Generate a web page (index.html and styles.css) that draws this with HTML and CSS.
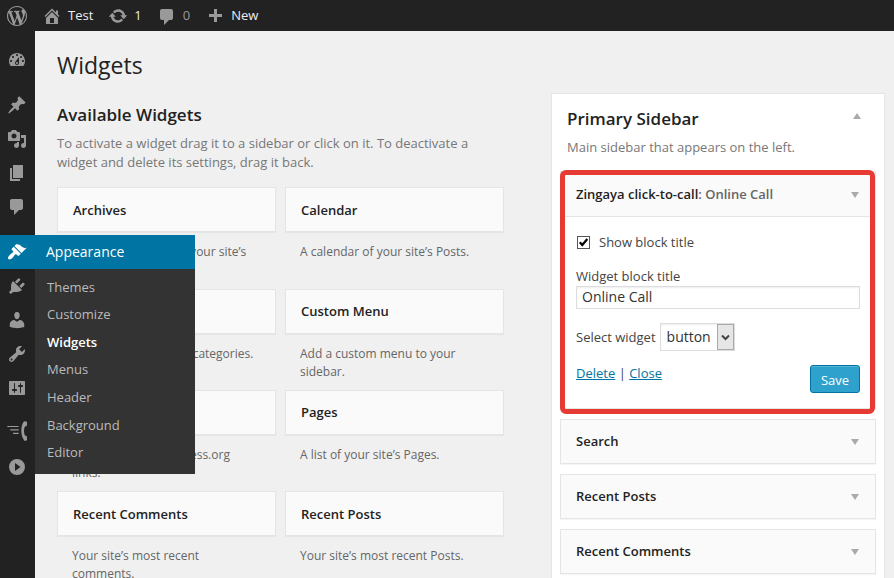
FILE: index.html
```html
<!DOCTYPE html>
<html lang="en">
<head>
<meta charset="utf-8">
<title>Widgets</title>
<link rel="stylesheet" href="styles.css">
</head>
<body>
<header class="adminbar">
  <svg class="icon logo" viewBox="0 0 20 20"><path d="M20 10c0-5.51-4.49-10-10-10C4.48 0 0 4.49 0 10c0 5.52 4.48 10 10 10 5.51 0 10-4.48 10-10zM7.78 15.37L4.37 6.22c.55-.02 1.17-.08 1.17-.08.5-.06.44-1.13-.06-1.11 0 0-1.45.11-2.37.11-.18 0-.37 0-.58-.01C4.12 2.69 6.87 1.11 10 1.11c2.33 0 4.45.87 6.05 2.34-.68-.11-1.65.39-1.65 1.58 0 .74.45 1.36.9 2.1.35.61.55 1.36.55 2.46 0 1.49-1.4 5-1.4 5l-3.03-8.37c.54-.02.82-.17.82-.17.5-.05.44-1.25-.06-1.22 0 0-1.44.12-2.38.12-.87 0-2.33-.12-2.33-.12-.5-.03-.56 1.2-.06 1.22l.92.08 1.26 3.41zM17.41 10c.24-.64.74-1.87.43-4.25.7 1.29 1.05 2.71 1.05 4.25 0 3.29-1.73 6.24-4.4 7.78.97-2.59 1.94-5.2 2.92-7.78zM6.1 18.09C3.12 16.65 1.11 13.53 1.11 10c0-1.3.23-2.48.72-3.59C3.25 10.3 4.67 14.2 6.1 18.09zm4.03-6.63l2.58 6.98c-.86.29-1.76.45-2.71.45-.79 0-1.57-.11-2.29-.33.81-2.38 1.62-4.74 2.42-7.1z"/></svg>
  <a class="bar-item site"><svg class="icon" viewBox="0 0 20 20"><path d="M16 8.500l1.530 1.530-1.060 1.060L10 4.600l-6.470 6.490-1.060-1.060L10 2.500l4 4v-2h2v4zm-6-2.460l6 5.990V18H4v-5.970zM12 17v-5H8v5h4z"/></svg><span>Test</span></a>
  <a class="bar-item updates"><svg class="icon" viewBox="0 0 20 20"><path d="M10.2 3.28c3.53 0 6.43 2.61 6.92 6h2.08l-3.5 4-3.5-4h2.32c-.45-1.97-2.21-3.45-4.32-3.45-1.45 0-2.73.71-3.54 1.78L4.95 5.66C6.23 4.2 8.11 3.28 10.2 3.28zm-.4 13.44c-3.52 0-6.43-2.61-6.92-6H.8l3.5-4c1.17 1.33 2.33 2.67 3.5 4H5.48c.45 1.97 2.21 3.45 4.32 3.45 1.45 0 2.73-.71 3.54-1.78l1.71 1.95c-1.28 1.46-3.15 2.38-5.25 2.38z"/></svg><span>1</span></a>
  <a class="bar-item comments"><svg class="icon" viewBox="0 0 20 20"><path d="M5 2h9c1.1 0 2 .9 2 2v7c0 1.1-.9 2-2 2h-2l-5 5v-5H5c-1.1 0-2-.9-2-2V4c0-1.1.9-2 2-2z"/></svg><span>0</span></a>
  <a class="bar-item new"><svg class="icon" viewBox="0 0 20 20"><path d="M17 7v3h-5v5H9v-5H4V7h5V2h3v5h5z"/></svg><span>New</span></a>
</header>
<div class="shell">
  <nav class="adminmenu">
    <a class="menu-item"><svg class="icon" viewBox="0 0 20 20"><path d="M3.76 16h12.48c1.1-1.37 1.76-3.11 1.76-5 0-4.42-3.58-8-8-8s-8 3.58-8 8c0 1.89.66 3.63 1.76 5zM10 4c.55 0 1 .45 1 1s-.45 1-1 1-1-.45-1-1 .45-1 1-1zM6 6c.55 0 1 .45 1 1s-.45 1-1 1-1-.45-1-1 .45-1 1-1zm8 0c.55 0 1 .45 1 1s-.45 1-1 1-1-.45-1-1 .45-1 1-1zm-5.37 5.55L12 7v6c0 1.1-.9 2-2 2s-2-.9-2-2c0-.57.24-1.08.63-1.45zM4 10c.55 0 1 .45 1 1s-.45 1-1 1-1-.45-1-1 .45-1 1-1zm12 0c.55 0 1 .45 1 1s-.45 1-1 1-1-.45-1-1 .45-1 1-1zm-5 3c0-.55-.45-1-1-1s-1 .45-1 1 .45 1 1 1 1-.45 1-1z"/></svg></a>
    <div class="separator"></div>
    <a class="menu-item"><svg class="icon" viewBox="0 0 20 20"><path d="M10.44 3.02l1.82-1.82 6.36 6.35-1.83 1.82c-1.05-.68-2.48-.57-3.41.36l-.75.75c-.92.93-1.04 2.35-.35 3.41l-1.83 1.82-2.41-2.41-2.8 2.79c-.42.42-3.38 2.71-3.8 2.29s1.86-3.39 2.28-3.81l2.79-2.79L4.1 9.36l1.83-1.82c1.05.69 2.48.57 3.4-.36l.75-.75c.93-.92 1.05-2.35.36-3.41z"/></svg></a>
    <a class="menu-item"><svg class="icon" viewBox="0 0 20 20"><path d="M13 11V4c0-.55-.45-1-1-1h-1.67L9 1H5L3.67 3H2c-.55 0-1 .45-1 1v7c0 .55.45 1 1 1h10c.55 0 1-.45 1-1zM7 4.5c1.38 0 2.5 1.12 2.5 2.5S8.38 9.5 7 9.5 4.5 8.38 4.5 7 5.62 4.5 7 4.5zM14 6h5v10.5c0 1.38-1.12 2.5-2.5 2.5S14 17.88 14 16.5s1.12-2.5 2.5-2.5c.17 0 .34.02.5.05V9h-3V6zm-4 8.05V13h2v3.5c0 1.38-1.12 2.5-2.5 2.5S7 17.88 7 16.5 8.12 14 9.5 14c.17 0 .34.02.5.05z"/></svg></a>
    <a class="menu-item"><svg class="icon" viewBox="0 0 20 20"><path d="M6 15V2h10v13H6zm-1 1h8v2H3V5h2v11z"/></svg></a>
    <a class="menu-item"><svg class="icon" viewBox="0 0 20 20"><path d="M5 2h9c1.1 0 2 .9 2 2v7c0 1.1-.9 2-2 2h-2l-5 5v-5H5c-1.1 0-2-.9-2-2V4c0-1.1.9-2 2-2z"/></svg></a>
    <div class="separator"></div>
    <div class="menu-current">
      <a class="menu-item"><svg class="icon" viewBox="0 0 20 20"><path d="M14.48 11.06L7.41 3.99l1.5-1.5c.5-.56 2.3-.47 3.51.32 1.21.8 1.43 1.28 2.91 2.1 1.18.64 2.45 1.26 4.45.85zm-.71.71L6.7 4.7 4.93 6.47c-.39.39-.39 1.02 0 1.41l1.06 1.06c.39.39.39 1.03 0 1.42-.6.6-1.43 1.11-2.21 1.69-.35.26-.7.53-1.01.84C1.43 14.23.4 16.08 1.4 17.07c.99 1 2.84-.03 4.18-1.36.31-.31.58-.66.85-1.02.57-.78 1.08-1.61 1.69-2.21.39-.39 1.02-.39 1.41 0l1.06 1.06c.39.39 1.02.39 1.41 0z"/></svg></a>
      <div class="flyout">
        <div class="flyout-head">Appearance</div>
        <ul class="submenu">
          <li>Themes</li>
          <li>Customize</li>
          <li class="active">Widgets</li>
          <li>Menus</li>
          <li>Header</li>
          <li>Background</li>
          <li>Editor</li>
        </ul>
      </div>
    </div>
    <a class="menu-item"><svg class="icon" viewBox="0 0 20 20"><path d="M13.11 4.36L9.87 7.6 8 5.73l3.24-3.24c.35-.34 1.05-.2 1.56.32.52.51.66 1.21.31 1.55zm-8 1.77l.91-1.12 9.01 9.01-1.19.84c-.71.71-2.63 1.16-3.82 1.16H6.14L4.9 17.26c-.59.59-1.54.59-2.12 0-.59-.58-.59-1.53 0-2.12l1.24-1.24v-3.88c0-1.13.4-3.19 1.09-3.89zm7.26 3.97l3.24-3.24c.34-.35 1.04-.21 1.55.31.52.51.66 1.21.31 1.55l-3.24 3.25z"/></svg></a>
    <a class="menu-item"><svg class="icon" viewBox="0 0 20 20"><path d="M10 9.25c-2.27 0-2.73-3.44-2.73-3.44C7 4.02 7.82 2 9.97 2c2.16 0 2.98 2.02 2.71 3.81 0 0-.41 3.44-2.68 3.44zm0 2.57L12.72 10c2.39 0 4.52 2.33 4.52 4.53v2.49s-3.65 1.13-7.24 1.13c-3.65 0-7.24-1.13-7.24-1.13v-2.49c0-2.25 1.94-4.48 4.47-4.48z"/></svg></a>
    <a class="menu-item"><svg class="icon" viewBox="0 0 20 20"><path d="M16.68 9.77c-1.34 1.34-3.3 1.67-4.95.99l-5.41 6.52c-.99.99-2.59.99-3.58 0s-.99-2.59 0-3.57l6.52-5.42c-.68-1.65-.35-3.61.99-4.95 1.28-1.28 3.12-1.62 4.72-1.06l-2.89 2.89 2.82 2.82 2.86-2.87c.53 1.58.18 3.39-1.08 4.65zM3.81 16.21c.4.39 1.04.39 1.43 0 .4-.4.4-1.04 0-1.43-.39-.4-1.03-.4-1.43 0-.39.39-.39 1.03 0 1.43z"/></svg></a>
    <a class="menu-item"><svg class="icon" viewBox="0 0 20 20"><path d="M18 16V4c0-.55-.45-1-1-1H3c-.55 0-1 .45-1 1v12c0 .55.45 1 1 1h14c.55 0 1-.45 1-1zM8 11h1c.55 0 1 .45 1 1s-.45 1-1 1H8v1.5c0 .28-.22.5-.5.5s-.5-.22-.5-.5V13H6c-.55 0-1-.45-1-1s.45-1 1-1h1V5.5c0-.28.22-.5.5-.5s.5.22.5.5V11zm5-2h-1c-.55 0-1-.45-1-1s.45-1 1-1h1V5.5c0-.28.22-.5.5-.5s.5.22.5.5V7h1c.55 0 1 .45 1 1s-.45 1-1 1h-1v5.500c0 .28-.22.5-.5.5s-.5-.22-.5-.5V9z"/></svg></a>
    <a class="menu-item call"><svg class="icon" viewBox="0 0 20 20"><path d="M.3 4.900h11.200v1.200H.3zM3.300 8.300h8.400v1.200H3.300zM6 11.700h5.700v1.200H6zM17 .2l3 .6.200 3.700-2.400 1.300c-1.100 2.800-1.100 5.600 0 8.400l2.400 1.400-.2 3.700-2.400.600C13.300 15.200 13.300 4.800 17 .2z"/></svg></a>
    <a class="menu-item collapse"><svg class="icon" viewBox="0 0 20 20"><path fill-rule="evenodd" d="M10 2a8 8 0 1 1 0 16 8 8 0 0 1 0-16zM8 6v8l5.500-4z"/></svg></a>
  </nav>
  <main class="content">
    <section class="available">
      <h1>Widgets</h1>
      <h2>Available Widgets</h2>
      <p class="intro">To activate a widget drag it to a sidebar or click on it. To deactivate a widget and delete its settings, drag it back.</p>
      <div class="widget-grid">
        <article><h3 class="widget-title">Archives</h3><p>A monthly archive of your site’s Posts.</p></article>
        <article><h3 class="widget-title">Calendar</h3><p>A calendar of your site’s Posts.</p></article>
        <article><h3 class="widget-title">Categories</h3><p>A list or dropdown of categories.</p></article>
        <article><h3 class="widget-title">Custom Menu</h3><p>Add a custom menu to your sidebar.</p></article>
        <article><h3 class="widget-title">Meta</h3><p>Login, RSS, &amp; WordPress.org links.</p></article>
        <article><h3 class="widget-title">Pages</h3><p>A list of your site’s Pages.</p></article>
        <article><h3 class="widget-title">Recent Comments</h3><p>Your site’s most recent comments.</p></article>
        <article><h3 class="widget-title">Recent Posts</h3><p>Your site’s most recent Posts.</p></article>
      </div>
    </section>
    <section class="sidebar">
      <div class="sidebar-head"><h2>Primary Sidebar</h2><i class="arrow up"></i></div>
      <p class="sidebar-desc">Main sidebar that appears on the left.</p>
      <div class="widget open">
        <h3 class="widget-title"><span>Zingaya click-to-call<em>: Online Call</em></span><i class="arrow"></i></h3>
        <div class="widget-form">
          <label class="check"><span class="box"><svg viewBox="0 0 11 11"><path d="M1.800 5.200l2.500 2.800L9.300 2" /></svg></span>Show block title</label>
          <label class="field-label">Widget block title</label>
          <div class="text-input">Online Call</div>
          <div class="select-row"><label>Select widget</label><div class="select"><span>button</span><b><svg viewBox="0 0 9 7"><path d="M1 1.500l3.500 3.500L8 1.500"/></svg></b></div></div>
          <div class="actions"><div><a>Delete</a> | <a>Close</a></div><button>Save</button></div>
        </div>
      </div>
      <div class="widget"><h3 class="widget-title">Search<i class="arrow"></i></h3></div>
      <div class="widget"><h3 class="widget-title">Recent Posts<i class="arrow"></i></h3></div>
      <div class="widget"><h3 class="widget-title">Recent Comments<i class="arrow"></i></h3></div>
    </section>
  </main>
</div>
</body>
</html>
```
FILE: styles.css
```css
* { box-sizing: border-box; }
body, h1, h2, h3, p, ul { margin: 0; padding: 0; }
html, body { height: 578px; overflow: hidden; }
body {
  display: flex;
  flex-direction: column;
  background: #f0f0f0;
  color: #444;
  font: 13px/19px "Open Sans", sans-serif;
}
.icon { width: 20px; height: 20px; fill: #999; flex: none; display: block; }

.adminbar {
  height: 31px;
  flex: none;
  display: flex;
  align-items: center;
  background: #222;
  color: #eee;
}
.logo { margin-left: 7px; }
.bar-item { display: flex; align-items: center; }
.bar-item span { margin-left: 6px; }
.site { margin-left: 15px; }
.updates { margin-left: 15px; }
.comments { margin-left: 15px; }
.comments .icon { margin-top: 2px; }
.comments span { color: #999; }
.new { margin-left: 15px; }
.new .icon { margin-top: 3px; }

.shell { flex: 1; display: flex; min-height: 0; overflow: hidden; }
.adminmenu { width: 35px; flex: none; background: #222; padding-top: 12px; }
.menu-item { height: 34px; display: flex; align-items: center; padding-left: 7px; }
.separator { height: 11px; }
.menu-current { position: relative; background: #0074a2; }
.menu-current .icon { fill: #fff; }
.call { margin-top: 9px; }
.collapse { margin-top: 2px; }
.flyout { position: absolute; left: 35px; top: 0; width: 160px; z-index: 2; }
.flyout-head {
  height: 34px;
  padding-left: 11px;
  background: #0074a2;
  color: #fff;
  font-size: 14px;
  line-height: 34px;
}
.submenu {
  list-style: none;
  height: 205px;
  padding: 4.6px 0 0 12px;
  background: #333;
  color: #bbb;
  line-height: 27.6px;
}
.submenu .active { color: #fff; font-weight: 600; }

.content { flex: 1; display: flex; align-items: flex-start; padding-left: 22px; min-width: 0; }
.available { width: 447px; flex: none; }
h1 { margin-top: 18px; font-weight: 400; font-size: 23px; line-height: 32px; color: #222; }
h2 { font-weight: 600; font-size: 17px; line-height: 24px; color: #222; }
.available h2 { margin-top: 22px; }
.intro, .sidebar-desc { color: #777; }
.intro { margin-top: 7px; }
.widget-grid {
  display: grid;
  grid-template-columns: 219px 219px;
  grid-auto-rows: 101.3px;
  column-gap: 9px;
  margin-top: 15.3px;
}
.widget-grid p { padding: 11px 20px 0 15px; font-size: 12px; line-height: 18px; color: #666; }
.widget-title {
  height: 45px;
  display: flex;
  align-items: center;
  justify-content: space-between;
  padding: 1px 15px 0;
  border: 1px solid #e5e5e5;
  box-shadow: 0 1px 1px rgba(0,0,0,.04);
  background: #fafafa;
  color: #222;
  font-size: 13px;
  font-weight: 600;
}
.widget-title em { color: #666; font-style: normal; }

.sidebar {
  width: 334px;
  height: 520px;
  margin: 62px 0 0 47px;
  padding: 0 8px;
  border: 1px solid #e5e5e5;
  background: #fff;
}
.sidebar-head { display: flex; justify-content: space-between; padding: 13px 15px 0 7px; }
.arrow { width: 0; height: 0; border: 4.5px solid transparent; border-top: 6px solid #aaa; border-bottom: 0; margin-right: 1.5px; }
.arrow.up { border-top: 0; border-bottom: 6px solid #aaa; margin: 6px 0 0; }
.sidebar-desc { margin: 7px 0 0 7px; }
.widget { width: 316px; margin-bottom: 10px; }
.widget .widget-title { padding-top: 0; }
.widget .arrow { margin-top: 1px; }
.open {
  position: relative;
  height: 238px;
  margin-top: 14px;
  border: 1px solid #e5e5e5;
}
.open::after {
  content: "";
  position: absolute;
  inset: -2px 0 -6px -1px;
  border: 5px solid #e53b32;
  border-radius: 6px;
}
.open .widget-title { border-width: 0 0 1px; box-shadow: none; }
.widget-form { padding: 16px 15px 0; }
.check { display: flex; align-items: center; }
.box { width: 13px; height: 13px; margin: -1px 9px 0 1px; border: 1px solid #555; display: flex; }
.box svg { width: 11px; height: 11px; fill: none; stroke: #000; stroke-width: 2.2; }
.field-label { display: block; margin-top: 15px; }
.text-input {
  height: 23px;
  border: 1px solid #ddd;
  padding-left: 5px;
  font-size: 14px;
  line-height: 20px;
  color: #333;
  box-shadow: inset 0 1px 2px rgba(0,0,0,.07);
}
.select-row { display: flex; align-items: center; margin-top: 14px; gap: 4px; }
.select { width: 75px; height: 28px; display: flex; border: 1px solid #ddd; padding-left: 6px; justify-content: space-between; font-size: 14px; line-height: 26px; color: #333; box-shadow: inset 0 1px 2px rgba(0,0,0,.07); }
.select b { width: 17px; height: 26px; border: 1px solid #aaa; background: #e6e6e6; display: flex; align-items: center; justify-content: center; }
.select svg { width: 9px; height: 7px; fill: none; stroke: #444; stroke-width: 2; }
.actions { display: flex; justify-content: space-between; margin-top: 13px; }
.actions a { color: #0074a2; text-decoration: underline; }
button {
  width: 50px;
  height: 28px;
  margin-top: 1px;
  padding: 2px 0 0;
  border: 1px solid #0074a2;
  border-radius: 3px;
  background: #2ea2cc;
  box-shadow: inset 0 1px 0 rgba(120,200,230,.5);
  color: #fff;
  font: 13px/24px "Open Sans", sans-serif;
}
```
